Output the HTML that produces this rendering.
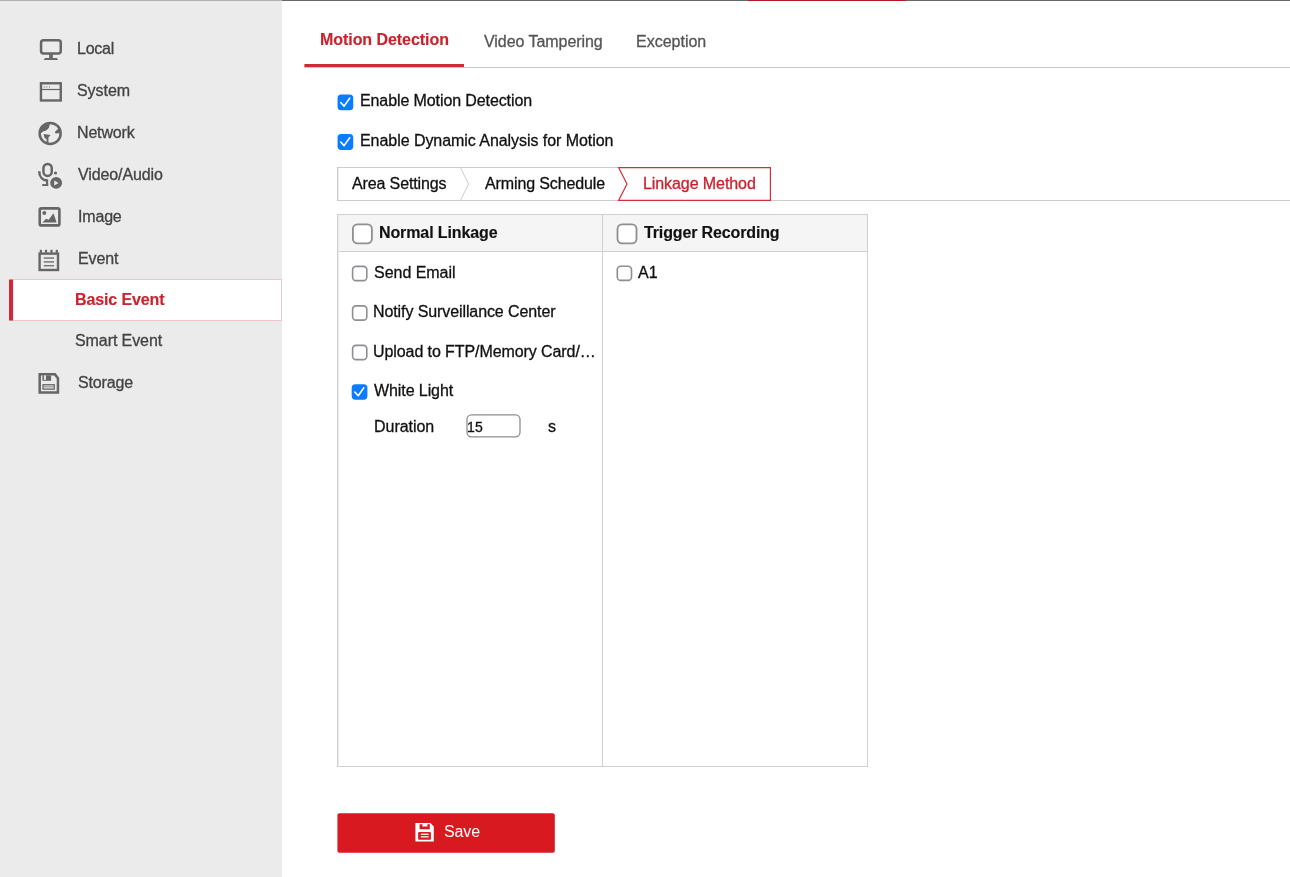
<!DOCTYPE html>
<html><head><meta charset="utf-8">
<style>
*{box-sizing:border-box;margin:0;padding:0}
html,body{width:1290px;height:877px;overflow:hidden;background:#fff;font-family:"Liberation Sans",sans-serif;font-size:16px}
#g{position:absolute;left:0;top:0}
.t{position:absolute;white-space:nowrap;line-height:20px;height:20px;font-size:16px;will-change:transform}
</style></head>
<body>
<svg id="g" width="1290" height="877" viewBox="0 0 1290 877">
  <!-- sidebar -->
  <rect x="0" y="0" width="282" height="877" fill="#ebebeb"/>
  <rect x="0" y="0" width="282" height="1" fill="#b0b0b0"/>
  <rect x="282" y="0" width="1008" height="1" fill="#666"/>
  <rect x="748" y="0" width="158" height="1" fill="#b01c24"/>

  <g fill="#666">
    <!-- Local: monitor -->
    <rect x="41.05" y="40.35" width="19.7" height="13.1" rx="2.4" fill="none" stroke="#666" stroke-width="2.5"/>
    <rect x="49.2" y="54" width="3.6" height="4.3"/>
    <path d="M45.1 57.9 L56.9 57.9 L58.1 60.1 L43.7 60.1 Z"/>

    <!-- System: window -->
    <rect x="40.95" y="83.27" width="19.8" height="17.2" fill="none" stroke="#666" stroke-width="2.4"/>
    <rect x="40" y="88.9" width="22" height="1.2"/>
    <circle cx="44.2" cy="86.9" r="0.65" fill="#7a7a7a"/><circle cx="46.8" cy="86.9" r="0.65" fill="#7a7a7a"/><circle cx="49.5" cy="86.9" r="0.65" fill="#7a7a7a"/>

    <!-- Network: globe -->
    <defs><clipPath id="gc"><circle cx="50.15" cy="133.4" r="11"/></clipPath></defs>
    <circle cx="50.15" cy="133.4" r="10.5" fill="none" stroke="#666" stroke-width="2.5"/>
    <g clip-path="url(#gc)">
      <path d="M38 136 L38 122 L44 120 L50 120 L49.7 123.8 L49.3 126.9 L47.4 129.5 L45.5 130.8 L42.9 131.4 L41 133.2 Z"/>
      <path d="M43.6 134 L50.6 134.9 L48.4 137.6 L48.5 146 L46.6 146 L46.5 139.2 L44.5 137.8 Z"/>
      <path d="M58.8 128.3 L54.8 132 L55.6 133.5 L58.3 133.2 L62 132.9 L62 126 Z"/>
    </g>

    <!-- Video/Audio -->
    <rect x="43.45" y="163.95" width="8.3" height="12" rx="4.15" fill="none" stroke="#666" stroke-width="2.5"/>
    <path d="M39.2 171.2 C39.2 176.8 42.6 180.5 47.6 180.5" fill="none" stroke="#666" stroke-width="2.5"/>
    <rect x="46" y="179.6" width="2.2" height="5.8"/>
    <rect x="42.2" y="184.1" width="6" height="1.9"/>
    <circle cx="55.5" cy="173" r="1.6"/>
    <circle cx="56.15" cy="182.9" r="5.95"/>
    <path d="M54.2 180.6 L54.2 185.4 L58.6 183.1 Z" fill="#ebebeb"/>

    <!-- Image -->
    <rect x="39.75" y="208.4" width="19.65" height="17" rx="1.5" fill="none" stroke="#666" stroke-width="2.6"/>
    <circle cx="44.3" cy="213" r="1.95"/>
    <path d="M42.4 222.5 L46 218.8 L48.7 219.8 L53.5 213.3 L56.6 222.5 Z"/>

    <!-- Event -->
    <rect x="39.6" y="253.6" width="18.4" height="16.4" fill="none" stroke="#666" stroke-width="2.4"/>
    <rect x="39.8" y="249.8" width="2.2" height="3"/><rect x="44.9" y="249.8" width="2.2" height="3"/><rect x="50.4" y="249.8" width="2.2" height="3"/><rect x="55.7" y="249.8" width="2.2" height="3"/>
    <rect x="43.7" y="257.3" width="10.4" height="1.5" fill="#787878"/>
    <rect x="43.7" y="261.15" width="10.4" height="1.5" fill="#787878"/>
    <rect x="43.7" y="264.95" width="10.4" height="1.5" fill="#787878"/>

    <!-- Storage -->
    <path d="M39.7 374.35 L54.9 374.35 L57.95 378.2 L57.95 392.45 L39.7 392.45 Z" fill="none" stroke="#666" stroke-width="2.5"/>
    <rect x="42.4" y="375.4" width="8.7" height="5.4"/>
    <rect x="43.9" y="375.4" width="2.1" height="4.5" fill="#e6e6e6"/>
    <rect x="43.05" y="384.75" width="11.2" height="4.35" fill="none" stroke="#666" stroke-width="1.3"/>
    <rect x="43.6" y="386.3" width="10.2" height="1" fill="#8a8a8a"/>
  </g>

  <!-- selected row -->
  <rect x="9" y="279" width="273" height="42" fill="#fff"/>
  <rect x="9" y="279" width="273" height="1" fill="#f2c3c7"/>
  <rect x="9" y="320" width="273" height="1" fill="#f2c3c7"/>
  <rect x="281" y="279" width="1" height="42" fill="#f2c3c7"/>
  <rect x="9" y="279.6" width="4.1" height="40.9" fill="#d0283a"/>

  <!-- tabs -->
  <rect x="304" y="67" width="986" height="1" fill="#c8c8c8"/>
  <rect x="304.4" y="64" width="159.6" height="3" fill="#cf2a36"/>

  <!-- step tabs -->
  <rect x="337" y="167" width="282" height="1" fill="#cccccc"/>
  <rect x="337" y="167" width="1" height="34" fill="#cccccc"/><rect x="338" y="168" width="1" height="32" fill="#ececec"/>
  <rect x="337" y="200" width="953" height="1" fill="#cccccc"/>
  <path d="M460.5 167.5 L468.5 184 L460.5 200.5" stroke="#cccccc" stroke-width="1" fill="none"/>
  <path d="M618.6 167.6 L770.4 167.6 L770.4 200.4 L618.6 200.4 L627 184 Z" stroke="#d0303a" stroke-width="1.2" fill="#fff"/>

  <!-- table -->
  <rect x="337.5" y="214.5" width="530" height="552" fill="none" stroke="#d0d0d0" stroke-width="1"/>
  <rect x="338" y="215" width="529" height="36" fill="#f5f5f5"/>
  <rect x="338" y="251" width="529" height="1" fill="#d0d0d0"/>
  <rect x="602" y="215" width="1" height="551" fill="#d0d0d0"/><rect x="338" y="215" width="1" height="551" fill="#ececec"/>

  <!-- checkboxes: checked -->
  <g>
    <rect x="337.55" y="94.45" width="15.7" height="15.9" rx="3.6" fill="#0b7bff"/>
    <path d="M340.7 102.5 L344.1 106.1 L349.7 98.2" fill="none" stroke="#fff" stroke-width="1.6" stroke-linecap="round" stroke-linejoin="round"/>
    <rect x="337.55" y="134" width="15.7" height="15.9" rx="3.6" fill="#0b7bff"/>
    <path d="M340.7 142.05 L344.1 145.65 L349.7 137.75" fill="none" stroke="#fff" stroke-width="1.6" stroke-linecap="round" stroke-linejoin="round"/>
    <rect x="351.7" y="384.2" width="15.7" height="15.5" rx="3.6" fill="#0b7bff"/>
    <path d="M354.85 392.1 L358.25 395.7 L363.85 387.8" fill="none" stroke="#fff" stroke-width="1.6" stroke-linecap="round" stroke-linejoin="round"/>
  </g>
  <!-- checkboxes: unchecked -->
  <g fill="#fff" stroke="#8e8e93">
    <rect x="352.9" y="224.4" width="19" height="19" rx="4.6" stroke-width="1.8"/>
    <rect x="617.5" y="224.4" width="19" height="19" rx="4.6" stroke-width="1.8"/>
    <rect x="352.6" y="266.4" width="14.2" height="14.2" rx="3.4" stroke-width="1.6"/>
    <rect x="352.6" y="305.9" width="14.2" height="14.2" rx="3.4" stroke-width="1.6"/>
    <rect x="352.6" y="345.4" width="14.2" height="14.2" rx="3.4" stroke-width="1.6"/>
    <rect x="617.3" y="266.2" width="14.2" height="14.2" rx="3.4" stroke-width="1.6"/>
  </g>
  <!-- duration input -->
  <rect x="467" y="414.85" width="53" height="22" rx="4.5" fill="#fff" stroke="#8e8e93" stroke-width="1.3"/>

  <!-- save button -->
  <rect x="337.4" y="813.2" width="217.4" height="39.6" rx="2" fill="#d81920"/>
  <g transform="translate(414 822)">
    <path d="M1.43 0.95 L16.4 0.95 L19.78 4.6 L19.78 19.46 L1.43 19.46 Z" fill="#fff"/>
    <path d="M5.58 2.22 L8.45 2.22 L8.45 4.46 L13.4 4.46 L13.4 2.22 L15.8 2.22 L15.8 7.17 L5.58 7.17 Z" fill="#d81920"/>
    <rect x="4.14" y="10.04" width="12.76" height="7.82" rx="1.2" fill="#d81920"/>
    <rect x="6.85" y="11.64" width="7.82" height="1.26" fill="#fff"/>
    <rect x="6.85" y="14.2" width="7.82" height="1.27" fill="#fff"/>
  </g>
</svg>
<div class="t" id="local" style="left:77px;top:39px;letter-spacing:-0.231px;color:#434343;-webkit-text-stroke:0.3px #434343">Local</div>
<div class="t" id="system" style="left:77px;top:81px;letter-spacing:-0.057px;color:#434343;-webkit-text-stroke:0.3px #434343">System</div>
<div class="t" id="network" style="left:77px;top:123px;letter-spacing:-0.165px;color:#434343;-webkit-text-stroke:0.3px #434343">Network</div>
<div class="t" id="va" style="left:78px;top:165px;letter-spacing:-0.11px;color:#434343;-webkit-text-stroke:0.3px #434343">Video/Audio</div>
<div class="t" id="image" style="left:78px;top:207px;letter-spacing:-0.174px;color:#434343;-webkit-text-stroke:0.3px #434343">Image</div>
<div class="t" id="event" style="left:78px;top:249px;letter-spacing:-0.123px;color:#434343;-webkit-text-stroke:0.3px #434343">Event</div>
<div class="t" id="basic" style="left:75px;top:290px;letter-spacing:-0.123px;color:#cb222e;font-weight:bold;-webkit-text-stroke:0.15px #cb222e">Basic Event</div>
<div class="t" id="smart" style="left:75px;top:331px;letter-spacing:-0.087px;color:#434343;-webkit-text-stroke:0.3px #434343">Smart Event</div>
<div class="t" id="storage" style="left:78px;top:373px;letter-spacing:-0.137px;color:#434343;-webkit-text-stroke:0.3px #434343">Storage</div>
<div class="t" id="md" style="left:320px;top:30px;letter-spacing:-0.055px;color:#cb222e;font-weight:bold;-webkit-text-stroke:0.15px #cb222e">Motion Detection</div>
<div class="t" id="vt" style="left:484px;top:32px;letter-spacing:-0.053px;color:#555;-webkit-text-stroke:0.3px #555">Video Tampering</div>
<div class="t" id="exc" style="left:636px;top:32px;letter-spacing:0.0px;color:#555;-webkit-text-stroke:0.3px #555">Exception</div>
<div class="t" id="emd" style="left:360px;top:91px;letter-spacing:-0.101px;color:#111;-webkit-text-stroke:0.3px #111">Enable Motion Detection</div>
<div class="t" id="eda" style="left:360px;top:131px;letter-spacing:-0.053px;color:#111;-webkit-text-stroke:0.3px #111">Enable Dynamic Analysis for Motion</div>
<div class="t" id="area" style="left:352px;top:174px;letter-spacing:-0.129px;color:#111;-webkit-text-stroke:0.3px #111">Area Settings</div>
<div class="t" id="arm" style="left:485px;top:174px;letter-spacing:-0.123px;color:#111;-webkit-text-stroke:0.3px #111">Arming Schedule</div>
<div class="t" id="lm" style="left:643px;top:174px;letter-spacing:-0.079px;color:#cb222e;-webkit-text-stroke:0.3px #cb222e">Linkage Method</div>
<div class="t" id="nl" style="left:379px;top:223px;letter-spacing:-0.107px;color:#111;font-weight:bold;-webkit-text-stroke:0.15px #111">Normal Linkage</div>
<div class="t" id="tr" style="left:644px;top:223px;letter-spacing:-0.136px;color:#111;font-weight:bold;-webkit-text-stroke:0.15px #111">Trigger Recording</div>
<div class="t" id="se" style="left:374px;top:263px;letter-spacing:-0.03px;color:#111;-webkit-text-stroke:0.3px #111">Send Email</div>
<div class="t" id="nsc" style="left:373px;top:302px;letter-spacing:-0.097px;color:#111;-webkit-text-stroke:0.3px #111">Notify Surveillance Center</div>
<div class="t" id="upl" style="left:373px;top:342px;letter-spacing:-0.083px;color:#111;-webkit-text-stroke:0.3px #111">Upload to FTP/Memory Card/…</div>
<div class="t" id="wl" style="left:374px;top:381px;letter-spacing:-0.085px;color:#111;-webkit-text-stroke:0.3px #111">White Light</div>
<div class="t" id="dur" style="left:374px;top:417px;letter-spacing:-0.031px;color:#111;-webkit-text-stroke:0.3px #111">Duration</div>
<div class="t" id="s" style="left:548px;top:417px;letter-spacing:0.0px;color:#111;-webkit-text-stroke:0.3px #111">s</div>
<div class="t" id="a1" style="left:638px;top:263px;letter-spacing:0.2px;color:#111;-webkit-text-stroke:0.3px #111">A1</div>
<div class="t" id="save" style="left:444px;top:822px;letter-spacing:-0.119px;color:#fff">Save</div>
<div class="t" id="n15" style="left:467px;top:417px;letter-spacing:0.14px;color:#111;-webkit-text-stroke:0.3px #111;font-size:14px">15</div>
</body></html>
